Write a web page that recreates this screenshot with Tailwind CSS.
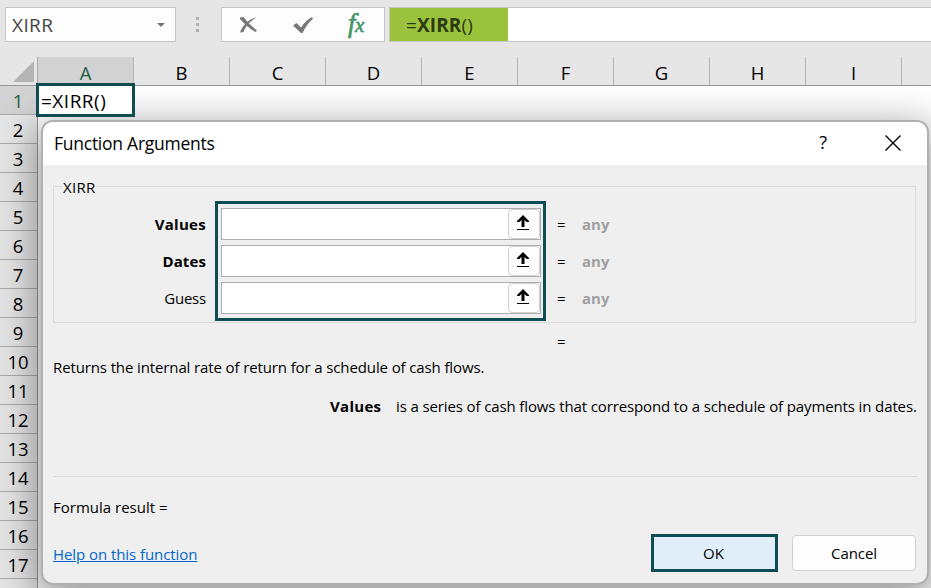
<!DOCTYPE html>
<html lang="en">
<head>
    <meta charset="UTF-8">
    <meta name="viewport" content="width=device-width, initial-scale=1.0">
    <title>Function Arguments</title>
    <script src="https://cdn.jsdelivr.net/npm/@tailwindcss/browser@4"></script>
</head>
<body class="relative w-[931px] h-[588px] overflow-hidden bg-[#e6e6e6] font-['Open_Sans','Noto_Sans',sans-serif] text-black">

    <!-- Formula bar -->
    <div class="flex h-[57px] items-start pt-[7px] pl-[5px]">
        <div class="flex h-[35px] w-[171px] items-center justify-between border border-[#c6c6c6] bg-[#fdfdfd] pl-1.5 pr-[10px] text-[#444]">
            <span class="pt-0.5 text-[19px] tracking-[0.4px]">XIRR</span>
            <svg class="h-1 w-2" viewBox="0 0 8 4"><path d="M0 0h8L4 4z" fill="#777"/></svg>
        </div>
        <div class="flex h-[35px] w-[45px] flex-col items-center justify-center gap-[3px] pr-0.5">
            <span class="size-[3px] bg-[#b0b0b0]"></span>
            <span class="size-[3px] bg-[#b0b0b0]"></span>
            <span class="size-[3px] bg-[#b0b0b0]"></span>
        </div>
        <div class="flex h-[35px] w-[164px] items-center border border-[#c6c6c6] bg-[#fdfdfd]">
            <svg class="ml-[17px] h-[18px] w-5" viewBox="0 0 20 18"><path d="M1 1.500l3.500-.5c3 4 8 9 13.500 13.500l-1.500 1.500C10.500 12.500 5 7.500 1 3zM17.500 1.500C11.500 5 7.500 9 4.500 16l-3.500.5C3.500 9 10 3 17.500 1.500z" fill="#777"/></svg>
            <svg class="ml-[34px] h-[18px] w-5" viewBox="0 0 20 18"><path d="M0 9.500L3.500 7l4.500 4.500C11 7 14.500 3.500 19 1l1 1.500C15.500 6.500 12 11.500 9.500 17H8z" fill="#777"/></svg>
            <span class="ml-[35px] pb-0.5 font-['Liberation_Serif',serif] text-[27px] leading-none italic tracking-[-0.5px] text-[#439467] [-webkit-text-stroke:0.6px_#439467]">f<span class="text-[21px]">x</span></span>
        </div>
        <div class="ml-1 flex h-[35px] flex-1 border border-r-0 border-[#c6c6c6] bg-white">
            <div class="flex h-full w-[118px] items-center bg-[#9bc23c] pl-4 pt-0.5 text-[19px] tracking-[0.1px] text-[#2b3a12]">=<b>XIRR</b>()</div>
        </div>
    </div>

    <!-- Column headings -->
    <div class="flex h-[29px] border-b border-[#999] text-[18.5px] leading-[31px]">
        <div class="flex w-[38px] items-start justify-end border-r border-[#ababab] pr-[3px] pt-1">
            <svg class="h-[21px] w-[21px]" viewBox="0 0 21 21"><path d="M21 0v21H0z" fill="#b4b4b4"/></svg>
        </div>
        <div class="w-24 border-r border-[#b4b4b4] bg-[#d2d2d2] text-center text-[#215e45]">A</div>
        <div class="w-24 border-r border-[#b4b4b4] text-center">B</div>
        <div class="w-24 border-r border-[#b4b4b4] text-center">C</div>
        <div class="w-24 border-r border-[#b4b4b4] text-center">D</div>
        <div class="w-24 border-r border-[#b4b4b4] text-center">E</div>
        <div class="w-24 border-r border-[#b4b4b4] text-center">F</div>
        <div class="w-24 border-r border-[#b4b4b4] text-center">G</div>
        <div class="w-24 border-r border-[#b4b4b4] text-center">H</div>
        <div class="w-24 border-r border-[#b4b4b4] text-center">I</div>
    </div>

    <!-- Rows -->
    <div class="flex">
        <div id="rows" class="w-[38px] shrink-0 border-r border-[#999] text-[18.5px] leading-[29px]">
            <div class="h-[29px] border-b border-[#ababab] bg-[#d2d2d2] pr-px text-center text-[#215e45]">1</div>
        </div>
        <div class="h-[502px] flex-1 bg-white"></div>
    </div>

    <!-- Dialog -->
    <div class="absolute left-[41px] top-[120px] flex h-[465px] w-[888px] flex-col overflow-hidden rounded-[12px] border-2 border-[#b0b0b0] bg-[#efefef] text-[15px] leading-5 [box-shadow:0_12px_40px_6px_rgba(0,0,0,0.4)]">
        <div class="flex h-[43px] shrink-0 items-center bg-white pb-0.5 pl-[11px] pr-[26px]">
            <span class="flex-1 text-[17.5px] tracking-[-0.25px]">Function Arguments</span>
            <span class="mr-[58px] pb-0.5 text-[18px]">?</span>
            <svg class="size-4" viewBox="0 0 16 16"><path d="M.5 .5l15 15M15.500 .5l-15 15" stroke="#000" stroke-width="1.400"/></svg>
        </div>

        <div class="relative ml-2.5 mt-[21px] h-[137px] w-[863px] shrink-0 border border-[#dadada]">
            <span class="absolute -top-2.5 left-[9px] bg-[#efefef] leading-5 tracking-[0.3px]">XIRR</span>
            <div class="flex pt-[14px]">
                <div class="flex w-[152px] flex-col text-right leading-[37px] tracking-[0.3px] pt-[5px]">
                    <b>Values</b>
                    <b class="tracking-[0.1px]">Dates</b>
                    <span class="tracking-[-0.2px]">Guess</span>
                </div>
                <div class="ml-[9px] flex h-[120px] w-[331px] flex-col gap-[5px] border-3 border-[#0f4c53] pl-[3px] pt-1">
                    <div class="flex h-8 w-80 justify-end border border-[#abadb3] bg-white">
                        <div class="flex h-[30px] w-8 justify-center rounded-[4px] border border-[#d0d0d0] bg-[#fdfdfd] pr-0.5 pt-[5px]">
                            <svg class="h-[15px] w-3" viewBox="0 0 12 15"><path d="M6 0l6 6v1H9.500L7.500 5v7h-3V5l-2 2H0V6zM0 14h12v1H0z"/></svg>
                        </div>
                    </div>
                    <div class="flex h-8 w-80 justify-end border border-[#abadb3] bg-white">
                        <div class="flex h-[30px] w-8 justify-center rounded-[4px] border border-[#d0d0d0] bg-[#fdfdfd] pr-0.5 pt-[5px]">
                            <svg class="h-[15px] w-3" viewBox="0 0 12 15"><path d="M6 0l6 6v1H9.500L7.500 5v7h-3V5l-2 2H0V6zM0 14h12v1H0z"/></svg>
                        </div>
                    </div>
                    <div class="flex h-8 w-80 justify-end border border-[#abadb3] bg-white">
                        <div class="flex h-[30px] w-8 justify-center rounded-[4px] border border-[#d0d0d0] bg-[#fdfdfd] pr-0.5 pt-[5px]">
                            <svg class="h-[15px] w-3" viewBox="0 0 12 15"><path d="M6 0l6 6v1H9.500L7.500 5v7h-3V5l-2 2H0V6zM0 14h12v1H0z"/></svg>
                        </div>
                    </div>
                </div>
                <div class="ml-[11px] flex flex-col pt-[5px] leading-[37px]">
                    <div class="flex"><span class="w-[25px]">=</span><b class="text-[#a0a0a0]">any</b></div>
                    <div class="flex"><span class="w-[25px]">=</span><b class="text-[#a0a0a0]">any</b></div>
                    <div class="flex"><span class="w-[25px]">=</span><b class="text-[#a0a0a0]">any</b></div>
                </div>
            </div>
        </div>

        <div class="ml-[514px] mt-2">=</div>
        <p class="ml-2.5 mt-[6px] tracking-[-0.12px]">Returns the internal rate of return for a schedule of cash flows.</p>
        <p class="ml-[287px] mt-[19px] flex whitespace-nowrap"><b class="w-[66px] tracking-[0.3px]">Values</b><span class="tracking-[-0.12px]">is a series of cash flows that correspond to a schedule of payments in dates.</span></p>
        <div class="ml-2.5 mt-[60px] h-px w-[864px] shrink-0 bg-[#dadada]"></div>
        <p class="ml-2.5 mt-5">Formula result =</p>
        <div class="ml-2.5 mt-[17px] flex">
            <a href="#" class="mt-[10px] self-start tracking-[-0.07px] text-[#0067c8] underline">Help on this function</a>
            <div class="ml-auto mr-[11px] flex h-[38px] gap-3.5">
                <button class="h-[38px] w-[127px] border-3 border-[#0f4c53] bg-[#e0eef9] pr-0.5">OK</button>
                <button class="mt-px h-9 w-[124px] rounded-[4px] border border-[#d0d0d0] bg-[#fdfdfd] tracking-[-0.1px]">Cancel</button>
            </div>
        </div>
    </div>

    <!-- Selected cell -->
    <div class="absolute left-9 top-[83px] h-[34px] w-[99px] border-3 border-[#0f4c53] bg-white pl-0.5 text-[19px] leading-[30px] tracking-[0.5px]">=XIRR()</div>

    <script>
        const rows = document.getElementById('rows');
        for (let i = 2; i <= 18; i++) {
            const row = document.createElement('div');
            row.className = 'h-[29px] border-b border-[#ababab] pr-px text-center';
            row.textContent = i;
            rows.appendChild(row);
        }
    </script>
</body>
</html>
